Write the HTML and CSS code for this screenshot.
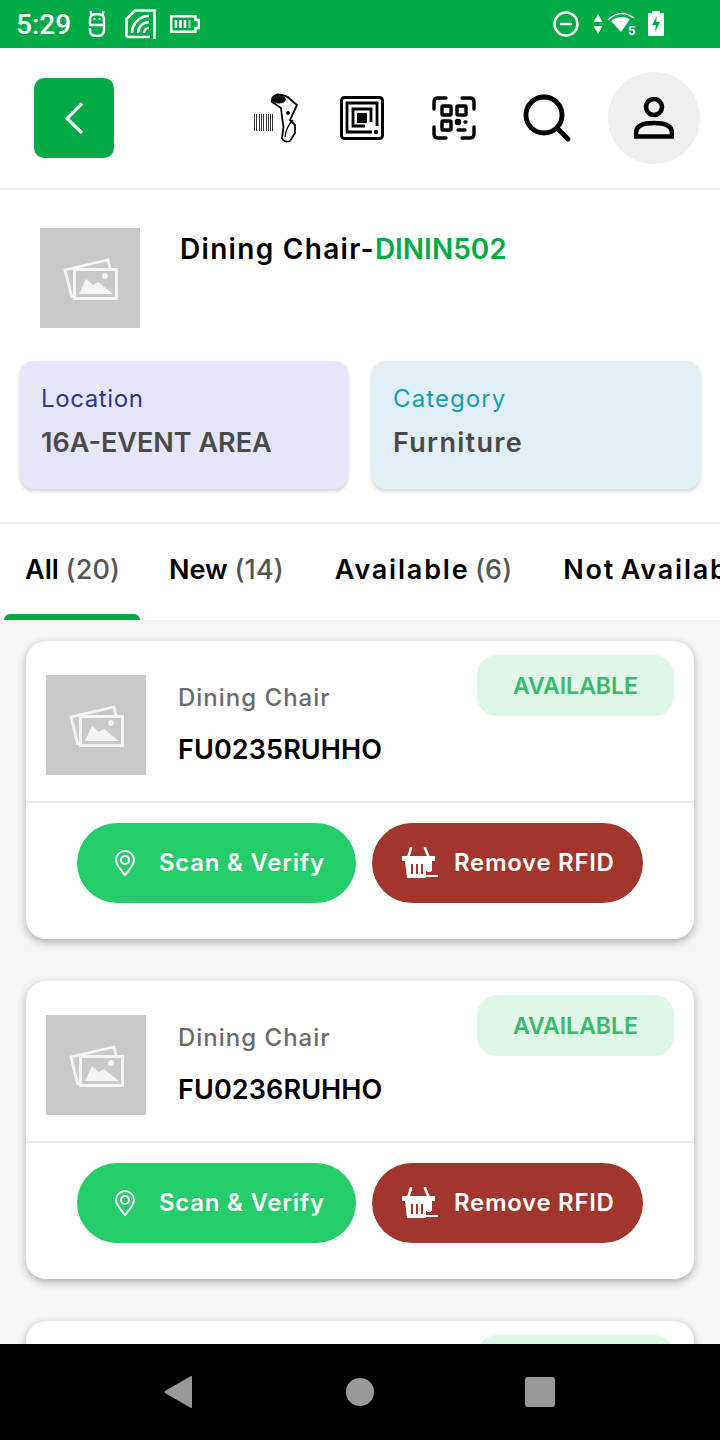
FILE: index.html
```html
<!DOCTYPE html>
<html>
<head>
<title>Asset Details</title>
<link rel="stylesheet" href="styles.css">
</head>
<body>
<svg class="defs" width="0" height="0">
    <symbol id="photo" viewBox="0 0 55 42">
        <path d="M9 40 L2 12 L45 2 L47 10" fill="none" stroke="currentColor" stroke-width="2.800"/>
        <rect x="11.500" y="11.500" width="42" height="29" fill="#c9c9c9" stroke="currentColor" stroke-width="3"/>
        <path d="M16 36 L23 21 L30 27 L35 24 L50 36 Z" fill="currentColor"/>
        <circle cx="42" cy="18" r="3" fill="currentColor"/>
    </symbol>
    <symbol id="pin" viewBox="0 0 22 28">
        <path d="M11 26 C7 21 2 16 2 11 A9 9 0 0 1 20 11 C20 16 15 21 11 26 Z" fill="none" stroke="currentColor" stroke-width="2"/>
        <circle cx="11" cy="11" r="4" fill="none" stroke="currentColor" stroke-width="2"/>
    </symbol>
    <symbol id="basket" viewBox="0 0 36 32">
        <path d="M6 11 L9 1 M23 1 L27 11" fill="none" stroke="currentColor" stroke-width="2.600" stroke-linecap="round"/>
        <path d="M0 9 H33 V14 H30 V24 H24 V31 H5 L3 14 H0 Z" fill="currentColor"/>
        <path d="M10 17 V27 M15 17 V27 M20 17 V27" stroke="#a2352e" stroke-width="2"/>
        <path d="M25 16 H29 V25 H25 Z" fill="currentColor"/>
        <path d="M24 29 H36" stroke="currentColor" stroke-width="2"/>
    </symbol>
</svg>

<div class="app">
    <div class="status-bar">
        <div class="status-left">
            <span class="clock">5:29</span>
            <svg width="18" height="26" viewBox="0 0 18 26" fill="none" stroke="#fff" stroke-width="2.400">
                <path d="M3.500 4 L2.500 0 M14.500 4 L15.500 0"/>
                <path d="M2 13 V8 Q2 3 9 3 Q16 3 16 8 V13 M1 14 H17 M16 14 V18 M2 17 V19 Q2 25 9 25 Q16 25 16 19 V17"/>
                <path d="M5.500 8 H7.500 M10.500 8 H12.500" stroke-width="2"/>
            </svg>
            <svg width="31" height="30" viewBox="0 0 31 30" fill="none" stroke="#fff" stroke-width="2.600">
                <path d="M29.500 30 V1.500 H10 L1.500 10 V26 Q1.500 28 4 28 H25"/>
                <path d="M7 24 A17 17 0 0 1 24 7"/>
                <path d="M13 24 A11 11 0 0 1 24 13"/>
                <path d="M19 24 A5 5 0 0 1 24 19"/>
            </svg>
            <svg width="30" height="18" viewBox="0 0 30 18" fill="none">
                <path d="M1.200 1.200 H25.500 V5 H28.800 V13 H25.500 V16.800 H1.200 Z" stroke="#fff" stroke-width="2.400"/>
                <path d="M6 5 V13 M10.500 5 V13 M15 5 V13" stroke="#fff" stroke-width="2.500"/>
                <path d="M19.500 5 V13" stroke="#fff" stroke-opacity=".5" stroke-width="2.500"/>
            </svg>
        </div>
        <div class="status-right">
            <svg class="dnd" width="26" height="26" viewBox="0 0 26 26" fill="none" stroke="#fff" stroke-width="2.400">
                <circle cx="13" cy="13" r="11.500"/>
                <path d="M7 13 H19"/>
            </svg>
            <svg class="updown" width="10" height="22" viewBox="0 0 10 22" fill="#fff">
                <path d="M5 1 L9.500 9 H.5 Z M5 21 L9.500 13 H.5 Z"/>
            </svg>
            <svg class="wifi" width="30" height="26" viewBox="0 0 30 26">
                <path d="M1 9 Q13 -3 27 7" fill="none" stroke="#fff" stroke-width="1.500"/>
                <path d="M4 10 Q13 3 23 8 L14 21 Z" fill="#fff"/>
                <text x="21" y="24" class="wifi-five">5</text>
            </svg>
            <svg width="16" height="26" viewBox="0 0 16 26">
                <path d="M4 2 V0 H12 V2 H16 V25 H0 V2 Z" fill="#fff"/>
                <path d="M9 5 L4 14 H8 L7 21 L12 11 H8 Z" fill="#00ab47"/>
            </svg>
        </div>
    </div>

    <div class="toolbar">
        <button class="back-btn">
            <svg width="20" height="32" viewBox="0 0 20 32" fill="none" stroke="#fff" stroke-width="3.200">
                <path d="M18 1.500 L3 16.500 L18 31"/>
            </svg>
        </button>
        <div class="toolbar-icons">
            <svg class="tool-scanner" width="46" height="50" viewBox="0 0 46 50" fill="none" stroke="#000">
                <path d="M2.500 21 V38 M4.500 21 V38 M7.500 21 V38 M9.500 21 V38 M11.500 21 V38 M14.500 21 V38 M16.500 21 V38 M18.500 21 V38 M20.500 21 V38" stroke-width="1" stroke="#333"/>
                <path d="M20 9 Q19 3 26 1.500 Q34 2 38 6 L45 12 L38 27 L43 32 V40 L38 48 Q32 50 30 45 L31.500 34 L30 24 L29 15 Z" stroke-width="1.800"/>
                <ellipse cx="27" cy="6.500" rx="6.500" ry="3.500" fill="#000"/>
                <circle cx="36" cy="20" r="1.500" fill="#000"/>
                <path d="M41 27 Q34 34 33 44" stroke-width="1.400"/>
            </svg>
            <svg class="tool-rfid" width="44" height="44" viewBox="0 0 44 44" fill="none" stroke="#000" stroke-width="2.800">
                <rect x="1.500" y="1.500" width="41" height="41" rx="3" stroke-width="3"/>
                <path d="M32 36 H7 V7 H37 V30"/>
                <path d="M25 30 H13 V13 H31 V26"/>
                <rect x="17" y="17" width="10" height="10" fill="#000" stroke="none"/>
                <circle cx="36" cy="36" r="2.200" fill="#000" stroke="none"/>
            </svg>
            <svg class="tool-qr" width="44" height="44" viewBox="0 0 44 44" fill="none" stroke="#000" stroke-width="3.400" stroke-linecap="round">
                <path d="M2 13 V6 Q2 2 6 2 H14 M30 2 H38 Q42 2 42 6 V13 M42 31 V38 Q42 42 38 42 H30 M14 42 H6 Q2 42 2 38 V31"/>
                <rect x="10" y="10" width="9" height="9" rx="1" stroke-linecap="butt"/>
                <rect x="25" y="10" width="9" height="9" rx="1" stroke-linecap="butt"/>
                <rect x="10" y="25" width="9" height="9" rx="1" stroke-linecap="butt"/>
                <circle cx="26" cy="26" r="1.600" fill="#000"/>
                <path d="M33 26 H34 M26 34 H33"/>
            </svg>
            <svg class="tool-search" width="48" height="48" viewBox="0 0 48 48" fill="none" stroke="#000" stroke-width="4.800" stroke-linecap="round">
                <circle cx="21" cy="21" r="18"/>
                <path d="M35 35 L45 45"/>
            </svg>
            <div class="avatar">
                <svg width="40" height="42" viewBox="0 0 40 42" fill="none" stroke="#000" stroke-width="4.600">
                    <circle cx="20" cy="10" r="8"/>
                    <path d="M2 39.500 V36 Q2 26 20 26 Q38 26 38 36 V39.500 Z"/>
                </svg>
            </div>
        </div>
    </div>

    <div class="product">
        <div class="thumb"><svg class="thumb-icon"><use href="#photo"/></svg></div>
        <h1 class="product-name">Dining Chair-<span class="code">DININ502</span></h1>
    </div>

    <div class="info-row">
        <div class="info-card location">
            <div class="info-label">Location</div>
            <div class="info-value">16A-EVENT AREA</div>
        </div>
        <div class="info-card category">
            <div class="info-label">Category</div>
            <div class="info-value">Furniture</div>
        </div>
    </div>

    <div class="tabs">
        <div class="tab active">All <span class="count">(20)</span></div>
        <div class="tab">New <span class="count">(14)</span></div>
        <div class="tab tab-long">Available <span class="count">(6)</span></div>
        <div class="tab tab-long">Not Available <span class="count">(0)</span></div>
    </div>

    <div class="list">
        <div class="item">
            <div class="item-top">
                <div class="thumb"><svg class="thumb-icon"><use href="#photo"/></svg></div>
                <div class="item-text">
                    <div class="item-name">Dining Chair</div>
                    <div class="item-code">FU0235RUHHO</div>
                </div>
                <span class="badge">AVAILABLE</span>
            </div>
            <div class="item-actions">
                <button class="pill verify"><svg class="pin-icon"><use href="#pin"/></svg>Scan &amp; Verify</button>
                <button class="pill remove"><svg class="basket-icon"><use href="#basket"/></svg>Remove RFID</button>
            </div>
        </div>
        <div class="item">
            <div class="item-top">
                <div class="thumb"><svg class="thumb-icon"><use href="#photo"/></svg></div>
                <div class="item-text">
                    <div class="item-name">Dining Chair</div>
                    <div class="item-code">FU0236RUHHO</div>
                </div>
                <span class="badge">AVAILABLE</span>
            </div>
            <div class="item-actions">
                <button class="pill verify"><svg class="pin-icon"><use href="#pin"/></svg>Scan &amp; Verify</button>
                <button class="pill remove"><svg class="basket-icon"><use href="#basket"/></svg>Remove RFID</button>
            </div>
        </div>
        <div class="item">
            <div class="item-top">
                <div class="thumb"><svg class="thumb-icon"><use href="#photo"/></svg></div>
                <div class="item-text">
                    <div class="item-name">Dining Chair</div>
                    <div class="item-code">FU0237RUHHO</div>
                </div>
                <span class="badge">AVAILABLE</span>
            </div>
        </div>
    </div>

    <div class="nav-bar">
        <svg width="30" height="34" viewBox="0 0 30 34" fill="#999"><path d="M28 1 Q29 1 29 2 V32 Q29 33 28 33 L2 18 Q1 17 2 16 Z"/></svg>
        <div class="nav-home"></div>
        <div class="nav-square"></div>
    </div>
</div>
</body>
</html>
```

FILE: styles.css
```css
* {
    box-sizing: border-box;
}
html, body {
    margin: 0;
    padding: 0;
}
body {
    font-family: Inter, "Noto Sans", sans-serif;
    background: #fff;
}
.defs {
    position: absolute;
}
button {
    border: none;
    padding: 0;
    font-family: inherit;
}
.app {
    width: 720px;
    height: 1440px;
    display: flex;
    flex-direction: column;
    overflow: hidden;
}

/* Status bar */
.status-bar {
    height: 48px;
    flex: none;
    background: #00ab47;
    display: flex;
    justify-content: space-between;
    align-items: center;
    color: #fff;
}
.status-left {
    display: flex;
    align-items: center;
    padding-left: 16px;
}
.clock {
    font-family: Roboto, sans-serif;
    font-size: 28px;
    font-weight: 500;
    width: 72px;
}
.status-left svg:nth-of-type(2) {
    margin-left: 19px;
}
.status-left svg:nth-of-type(3) {
    margin-left: 14px;
}
.status-right {
    display: flex;
    align-items: center;
    padding-right: 56px;
}
.dnd {
    margin-right: 1px;
}
.updown {
    margin-left: 13px;
}
.wifi {
    margin-left: 4px;
}
.wifi + svg {
    margin-left: 11px;
}
.wifi-five {
    font-family: Roboto, sans-serif;
    font-size: 13px;
    font-weight: 700;
    fill: #fff;
}

/* Toolbar */
.toolbar {
    height: 142px;
    flex: none;
    border-bottom: 2px solid #eee;
    display: flex;
    justify-content: space-between;
    align-items: center;
    padding: 0 20px 0 34px;
}
.back-btn {
    width: 80px;
    height: 80px;
    border-radius: 10px;
    background: #00ab47;
    display: flex;
    align-items: center;
    justify-content: center;
}
.toolbar-icons {
    display: flex;
    align-items: center;
}
.tool-rfid {
    margin-left: 42px;
}
.tool-qr {
    margin-left: 48px;
}
.tool-search {
    margin-left: 47px;
}
.avatar {
    width: 92px;
    height: 92px;
    border-radius: 50%;
    background: #efefef;
    margin-left: 37px;
    display: flex;
    align-items: center;
    justify-content: center;
}

/* Product header */
.product {
    display: flex;
    gap: 40px;
    padding: 38px 40px 0;
    height: 171px;
    flex: none;
}
.thumb {
    width: 100px;
    height: 100px;
    flex: none;
    background: #c9c9c9;
    color: #f4f4f4;
    display: flex;
    align-items: center;
    justify-content: center;
}
.thumb-icon {
    width: 55px;
    height: 42px;
    margin-top: 1px;
}
.product-name {
    margin: 0;
    font-size: 28px;
    font-weight: 600;
    line-height: 42px;
    letter-spacing: 1.300px;
    color: #000;
}
.code {
    color: #00ab47;
    letter-spacing: 0;
}

/* Location and category */
.info-row {
    display: flex;
    gap: 24px;
    padding: 0 20px;
    height: 161px;
    flex: none;
}
.info-card {
    flex: 1;
    height: 128px;
    border-radius: 14px;
    padding: 22px 21px;
    box-shadow: 0 2px 4px rgba(0, 0, 0, .2);
}
.location {
    background: #e6e5f9;
}
.category {
    background: #e1eef3;
}
.info-label {
    font-size: 24px;
    line-height: 32px;
    letter-spacing: .6px;
}
.location .info-label {
    color: #2e349b;
}
.category .info-label {
    color: #0d9fb5;
    letter-spacing: 1.100px;
}
.info-value {
    font-size: 27px;
    font-weight: 600;
    line-height: 38px;
    margin-top: 9px;
    color: #4a4a4a;
}
.category .info-value {
    letter-spacing: 1.300px;
}

/* Tabs */
.tabs {
    height: 98px;
    flex: none;
    border-top: 2px solid #eee;
    display: flex;
    padding-left: 4px;
    overflow: hidden;
}
.tab {
    flex: none;
    position: relative;
    padding: 28px 20px 0;
    font-size: 27px;
    font-weight: 600;
    line-height: 36px;
    color: #000;
    white-space: nowrap;
    margin-right: 11px;
}
.tab.active {
    width: 136px;
    margin-right: 9px;
    padding-left: 21px;
    padding-right: 0;
}
.tab.active::after {
    content: "";
    position: absolute;
    left: 0;
    right: 0;
    bottom: 0;
    height: 6px;
    border-radius: 6px 6px 0 0;
    background: #00ab47;
}
.tab-long {
    letter-spacing: 1.800px;
    word-spacing: -3px;
}
.count {
    color: #555;
    font-weight: 500;
    letter-spacing: .1px;
}

/* Item list */
.list {
    flex: 1;
    min-height: 0;
    overflow: hidden;
    background: #f5f5f5;
    padding: 21px 26px 0;
    display: flex;
    flex-direction: column;
    gap: 42px;
}
.item {
    flex: none;
    height: 298px;
    background: #fff;
    border-radius: 20px;
    box-shadow: 0 3px 8px rgba(0, 0, 0, .3);
}
.item-top {
    height: 162px;
    border-bottom: 2px solid #eee;
    display: flex;
    padding: 34px 20px 0;
    position: relative;
}
.item-text {
    margin-left: 32px;
}
.item-name {
    font-size: 24px;
    font-weight: 500;
    line-height: 46px;
    letter-spacing: 1px;
    color: #6b6b6b;
}
.item-code {
    font-size: 27px;
    font-weight: 600;
    line-height: 40px;
    margin-top: 9px;
    letter-spacing: .1px;
    color: #000;
}
.badge {
    position: absolute;
    top: 14px;
    right: 20px;
    width: 197px;
    height: 61px;
    border-radius: 20px;
    background: #e0f6e8;
    color: #38bb6e;
    font-size: 23px;
    font-weight: 600;
    display: flex;
    align-items: center;
    justify-content: center;
}
.item-actions {
    display: flex;
    gap: 16px;
    padding: 20px 0 0 51px;
}
.pill {
    height: 80px;
    border-radius: 40px;
    color: #fff;
    font-size: 24px;
    font-weight: 600;
    line-height: 28px;
    display: flex;
    align-items: center;
    white-space: nowrap;
}
.verify {
    width: 279px;
    background: #26cb6b;
    padding-left: 37px;
    letter-spacing: .75px;
}
.remove {
    width: 271px;
    background: #a2352e;
    padding-left: 30px;
    letter-spacing: .7px;
}
.pin-icon {
    width: 22px;
    height: 28px;
    margin-right: 23px;
}
.basket-icon {
    width: 36px;
    height: 32px;
    margin-right: 16px;
}

/* Android nav */
.nav-bar {
    height: 96px;
    flex: none;
    background: #000;
    display: flex;
    align-items: center;
    padding-left: 163px;
}
.nav-home {
    width: 28px;
    height: 28px;
    border-radius: 50%;
    background: #999;
    margin-left: 153px;
}
.nav-square {
    width: 30px;
    height: 30px;
    border-radius: 3px;
    background: #999;
    margin-left: 151px;
}
```
